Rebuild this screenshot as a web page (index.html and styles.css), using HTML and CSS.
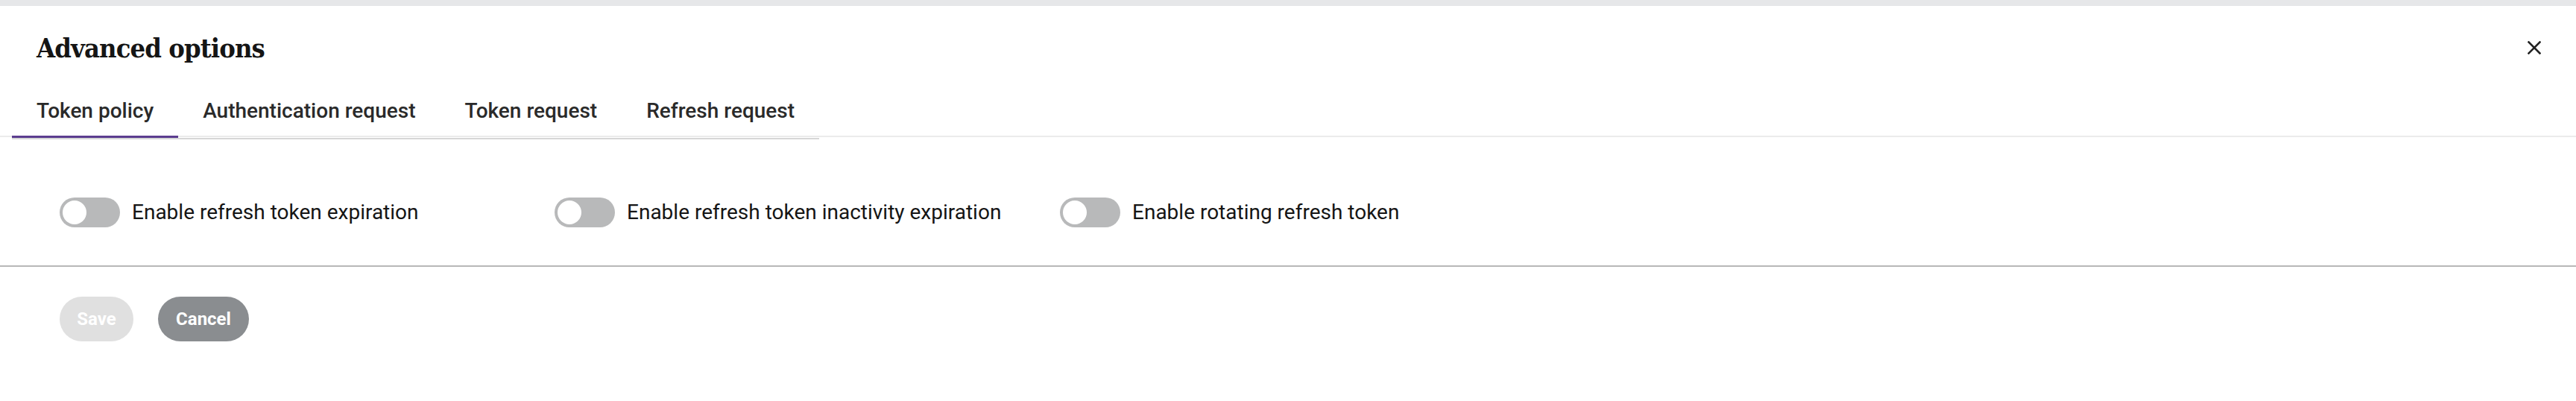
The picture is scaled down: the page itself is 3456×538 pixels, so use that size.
FILE: index.html
```html
<!DOCTYPE html>
<html lang="en">
<head>
<meta charset="utf-8">
<title>Advanced options</title>
<link rel="stylesheet" href="styles.css">
</head>
<body>
<div class="topbar"></div>
<div class="dialog">
  <header class="header">
    <h1 class="title">Advanced options</h1>
    <button class="close" aria-label="Close">
      <svg width="18" height="18" viewBox="0 0 18 18" aria-hidden="true">
        <path d="M1.5 1.5 L16.5 16.5 M16.5 1.5 L1.5 16.5" stroke="#222" stroke-width="2.6" stroke-linecap="square" fill="none"/>
      </svg>
    </button>
  </header>
  <nav class="tabbar">
    <ul class="tabs">
      <li class="tab active">Token policy</li>
      <li class="tab">Authentication request</li>
      <li class="tab">Token request</li>
      <li class="tab">Refresh request</li>
    </ul>
  </nav>
  <section class="content">
    <label class="switch-item">
      <span class="switch"><span class="knob"></span></span>
      <span class="switch-label">Enable refresh token expiration</span>
    </label>
    <label class="switch-item">
      <span class="switch"><span class="knob"></span></span>
      <span class="switch-label">Enable refresh token inactivity expiration</span>
    </label>
    <label class="switch-item">
      <span class="switch"><span class="knob"></span></span>
      <span class="switch-label">Enable rotating refresh token</span>
    </label>
  </section>
  <footer class="footer">
    <button class="btn btn-save" disabled>Save</button>
    <button class="btn btn-cancel">Cancel</button>
  </footer>
</div>
</body>
</html>
```

FILE: styles.css
```css
* { box-sizing: border-box; }
html, body {
  margin: 0;
  padding: 0;
  background: #ffffff;
}
body {
  font-family: Roboto, "Liberation Sans", sans-serif;
  color: #151515;
}
.topbar {
  height: 8px;
  background: #e6e7e9;
}
.header {
  height: 112px;
  display: flex;
  align-items: center;
  justify-content: space-between;
  padding: 0 47px 0 49px;
}
.title {
  margin: 0;
  font-family: "DejaVu Serif", "Liberation Serif", serif;
  font-stretch: condensed;
  font-weight: 700;
  font-size: 36px;
  letter-spacing: -0.9px;
  line-height: 40px;
  color: #151515;
}
.close {
  border: 0;
  background: transparent;
  padding: 0;
  width: 18px;
  height: 18px;
  display: flex;
}
.tabbar {
  padding-left: 16px;
  background: linear-gradient(#ebebeb, #ebebeb) no-repeat left 0 bottom 3px / 100% 2px;
}
.tabs {
  display: inline-flex;
  list-style: none;
  margin: 0;
  padding: 0;
  border-bottom: 2px solid #d6d6d6;
}
.tab {
  position: relative;
  padding: 9px 33px 16px;
  font-size: 28px;
  line-height: 40px;
  font-weight: 500;
  color: #2a2a2a;
  white-space: nowrap;
}
.tab.active::after {
  content: "";
  position: absolute;
  left: 0;
  right: 0;
  bottom: 0;
  height: 3px;
  background: #5b3d8f;
}
.content {
  display: grid;
  grid-template-columns: 664px 678px auto;
  align-items: center;
  padding: 78px 0 51px 80px;
  border-bottom: 2px solid #b8b8b8;
}
.switch-item {
  display: flex;
  align-items: center;
  gap: 16px;
}
.switch {
  width: 81px;
  height: 40px;
  border-radius: 20px;
  background: #b8b9ba;
  padding: 4px;
  display: flex;
  align-items: center;
  flex: none;
}
.knob {
  width: 32px;
  height: 32px;
  border-radius: 50%;
  background: #ffffff;
}
.switch-label {
  font-size: 28px;
  line-height: 40px;
  font-weight: 400;
  color: #151515;
  white-space: nowrap;
}
.footer {
  display: flex;
  gap: 33px;
  padding: 40px 0 0 80px;
}
.btn {
  height: 60px;
  border: 0;
  border-radius: 30px;
  padding: 0;
  font-family: Roboto, "Liberation Sans", sans-serif;
  font-weight: 700;
  font-size: 24px;
  color: #ffffff;
}
.btn-save {
  background: #e0e0e0;
  width: 99px;
}
.btn-cancel {
  background: #8a8d90;
  width: 122px;
}
```
